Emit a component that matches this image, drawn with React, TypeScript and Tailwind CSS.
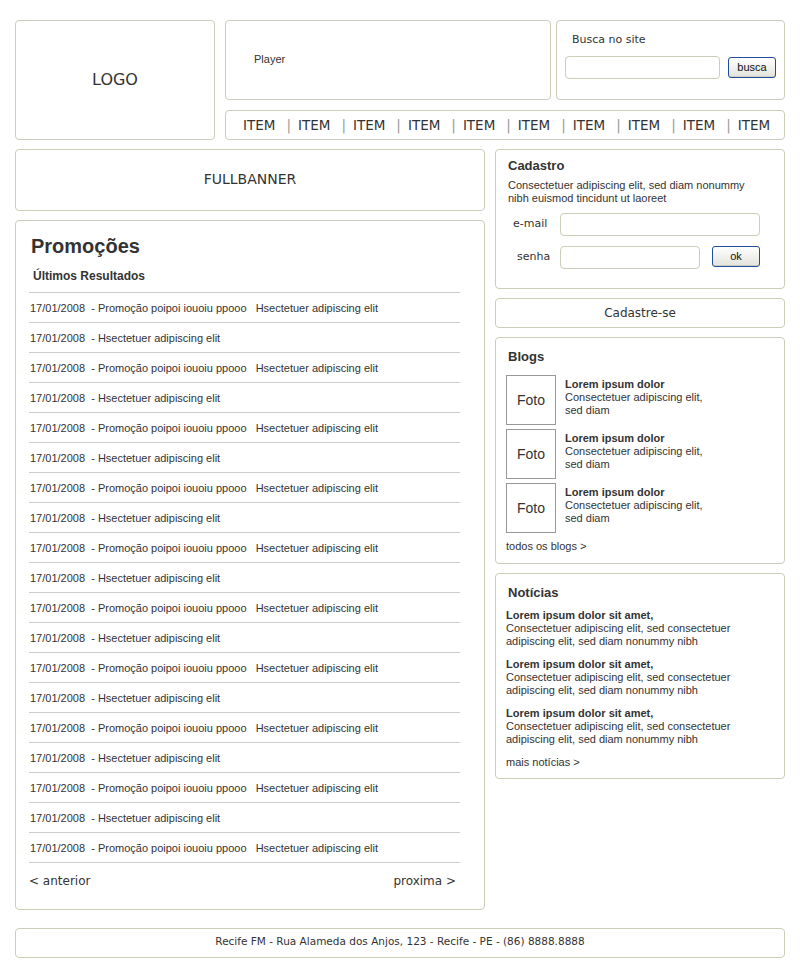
const rows = Array.from({ length: 19 }, (_, i) =>
  i % 2 === 0
    ? "17/01/2008\u00a0\u00a0- Promoção poipoi iouoiu ppooo\u00a0\u00a0\u00a0Hsectetuer adipiscing elit"
    : "17/01/2008\u00a0\u00a0- Hsectetuer adipiscing elit"
);

const blogs = [1, 2, 3];
const news = [1, 2, 3];

const box = "border border-[#cdccb9] rounded-[4px] bg-white";
const verdana = "font-['Verdana','DejaVu_Sans',sans-serif]";
const arial = "font-['Liberation_Sans','Arial',sans-serif]";

function XpButton({ label }: { label: string }) {
  return (
    <button
      className={`${arial} h-[21px] w-[48px] rounded-[3px] border border-[#1f4f9a] bg-gradient-to-b from-white to-[#e3e3dc] text-[11px] text-[#111] shadow-[inset_0_-1px_0_#cfcfc4]`}
    >
      {label}
    </button>
  );
}

export default function App() {
  return (
    <div className={`w-[800px] min-h-[972px] bg-white px-[15px] pt-[20px] pb-[14px] text-[#333] ${arial}`}>
      {/* Header */}
      <div className="flex gap-[10px]">
        <div className={`${box} ${verdana} flex h-[120px] w-[200px] items-center justify-center text-[16px] text-[#333]`}>
          LOGO
        </div>
        <div className="flex flex-1 flex-col gap-[10px]">
          <div className="flex h-[80px] gap-[5px]">
            <div className={`${box} w-[326px] pl-[28px] pt-[33px] text-[11px] leading-none`}>Player</div>
            <div className={`${box} flex-1 px-[8px] pt-[11px]`}>
              <div className={`${verdana} pl-[7px] text-[11px] text-[#333]`}>Busca no site</div>
              <div className="mt-[7px] flex items-center gap-[8px]">
                <input className="h-[23px] w-[155px] rounded-[4px] border border-[#cdccb9]" />
                <XpButton label="busca" />
              </div>
            </div>
          </div>
          <div className={`${box} ${verdana} flex h-[30px] items-center overflow-hidden whitespace-nowrap pl-[17px] text-[13.5px] text-[#333]`}>
            {Array.from({ length: 10 }).map((_, i) => (
              <span key={i} className="flex items-center">
                {i > 0 && <span className="ml-[11px] mr-[7px] text-[#999]">|</span>}
                ITEM
              </span>
            ))}
          </div>
        </div>
      </div>

      {/* Main */}
      <div className="mt-[9px] flex gap-[10px]">
        <div className="flex w-[470px] flex-col gap-[9px]">
          <div className={`${box} ${verdana} flex h-[62px] items-center justify-center pb-[2px] text-[14px] text-[#333]`}>
            FULLBANNER
          </div>
          <div className={`${box} h-[690px] pl-[13px] pr-[24px] pt-[13px]`}>
            <h1 className="pl-[2px] text-[20px] font-bold leading-[24px] text-[#333]">Promoções</h1>
            <h2 className="mt-[9px] pl-[4px] text-[12px] font-bold leading-[18px] text-[#333]">Últimos Resultados</h2>
            <div className="mt-[7px] border-t border-[#cccccc]">
              {rows.map((r, i) => (
                <div key={i} className="flex h-[30px] items-center border-b border-[#cccccc] pl-[1px] pt-[2px] text-[11px] text-[#333]">
                  {r}
                </div>
              ))}
            </div>
            <div className={`${verdana} mt-[9px] flex justify-between pr-[4px] text-[12px] text-[#333]`}>
              <span>&lt; anterior</span>
              <span>proxima &gt;</span>
            </div>
          </div>
        </div>

        <div className="flex w-[290px] flex-col gap-[9px]">
          <div className={`${box} h-[140px] pl-[12px] pr-[20px] pt-[8px]`}>
            <div className="text-[13px] font-bold leading-[16px] text-[#333]">Cadastro</div>
            <p className="mt-[5px] text-[11px] leading-[13px] text-[#333]">
              Consectetuer adipiscing elit, sed diam nonummy nibh euismod tincidunt ut laoreet
            </p>
            <div className={`${verdana} mt-[8px] flex items-center text-[11px] text-[#333]`}>
              <span className="w-[52px] pl-[5px]">e-mail</span>
              <input className="h-[23px] w-[200px] rounded-[4px] border border-[#cdccb9]" />
            </div>
            <div className={`${verdana} mt-[10px] flex items-center text-[11px] text-[#333]`}>
              <span className="w-[52px] pl-[9px]">senha</span>
              <input className="h-[23px] w-[140px] rounded-[4px] border border-[#cdccb9]" />
              <span className="ml-[12px] -mt-[2px]">
                <XpButton label="ok" />
              </span>
            </div>
          </div>

          <div className={`${box} ${verdana} flex h-[30px] items-center justify-center text-[12px] text-[#333]`}>
            Cadastre-se
          </div>

          <div className={`${box} h-[227px] pl-[10px] pt-[11px]`}>
            <div className="pl-[2px] text-[13px] font-bold leading-[16px] text-[#333]">Blogs</div>
            <div className="mt-[10px] flex flex-col gap-[4px]">
              {blogs.map((b) => (
                <div key={b} className="flex gap-[9px]">
                  <div className="flex h-[50px] w-[50px] items-center justify-center border border-[#999] text-[14px] text-[#333]">
                    Foto
                  </div>
                  <div className="pt-[3px] text-[11px] leading-[13px] text-[#333]">
                    <div className="font-bold">Lorem ipsum dolor</div>
                    <div>Consectetuer adipiscing elit,</div>
                    <div>sed diam</div>
                  </div>
                </div>
              ))}
            </div>
            <div className="mt-[7px] text-[11px] leading-[13px] text-[#333]">todos os blogs &gt;</div>
          </div>

          <div className={`${box} h-[206px] pl-[10px] pt-[11px]`}>
            <div className="pl-[2px] text-[13px] font-bold leading-[16px] text-[#333]">Notícias</div>
            <div className="mt-[8px] flex flex-col gap-[10px]">
              {news.map((n) => (
                <div key={n} className="text-[11px] leading-[13px] text-[#333]">
                  <div className="font-bold">Lorem ipsum dolor sit amet,</div>
                  <div>Consectetuer adipiscing elit, sed consectetuer</div>
                  <div>adipiscing elit, sed diam nonummy nibh</div>
                </div>
              ))}
            </div>
            <div className="mt-[10px] text-[11px] leading-[13px] text-[#333]">mais notícias &gt;</div>
          </div>
        </div>
      </div>

      {/* Footer */}
      <div className={`${box} ${verdana} mt-[18px] flex h-[30px] items-center justify-center pb-[3px] text-[10.5px] text-[#333]`}>
        Recife FM - Rua Alameda dos Anjos, 123 - Recife - PE - (86) 8888.8888
      </div>
    </div>
  );
}
